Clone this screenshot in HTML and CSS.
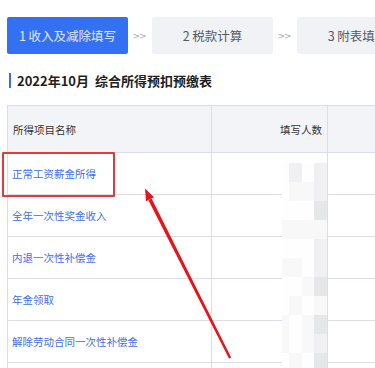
FILE: index.html
```html
<!DOCTYPE html>
<html lang="zh-CN">
<head>
<meta charset="utf-8">
<title>综合所得预扣预缴表</title>
<link rel="stylesheet" href="styles.css">
</head>
<body>
<div class="page">
  <div class="steps">
    <div class="step active">1 收入及减除填写</div>
    <div class="sep">&gt;&gt;</div>
    <div class="step">2 税款计算</div>
    <div class="sep">&gt;&gt;</div>
    <div class="step">3 附表填写</div>
  </div>
  <div class="title"><span class="bar"></span>2022年10月&nbsp;&nbsp;综合所得预扣预缴表</div>
  <div class="table-wrap">
    <table class="grid">
      <colgroup><col class="c1"><col class="c2"><col class="c3"></colgroup>
      <thead>
        <tr><th class="left">所得项目名称</th><th class="right">填写人数</th><th></th></tr>
      </thead>
      <tbody>
        <tr><td><a class="link">正常工资薪金所得</a></td><td></td><td></td></tr>
        <tr><td><a class="link">全年一次性奖金收入</a></td><td></td><td></td></tr>
        <tr><td><a class="link">内退一次性补偿金</a></td><td></td><td></td></tr>
        <tr><td><a class="link">年金领取</a></td><td></td><td></td></tr>
        <tr><td><a class="link">解除劳动合同一次性补偿金</a></td><td></td><td></td></tr>
        <tr><td></td><td></td><td></td></tr>
      </tbody>
    </table>
  </div>

  <div class="mosaic">
    <i class="m0"></i><i class="m2"></i><i class="m0"></i><i class="m2"></i>
    <i class="m0"></i><i class="m1"></i><i class="m1"></i><i class="m2"></i>
    <i class="m0"></i><i class="m0"></i><i class="m0"></i><i class="m3"></i>
    <i class="m1"></i><i class="m1"></i><i class="m1"></i><i class="m1"></i>
    <i class="m0"></i><i class="m0"></i><i class="m0"></i><i class="m2"></i>
    <i class="m1"></i><i class="m1"></i><i class="m0"></i><i class="m2"></i>
    <i class="m0"></i><i class="m0"></i><i class="m1"></i><i class="m3"></i>
    <i class="m0"></i><i class="m1"></i><i class="m0"></i><i class="m1"></i>
    <i class="m1"></i><i class="m0"></i><i class="m1"></i><i class="m3"></i>
    <i class="m1"></i><i class="m0"></i><i class="m1"></i><i class="m2"></i>
    <i class="m0"></i><i class="m1"></i><i class="m0"></i><i class="m3"></i>
  </div>

  <div class="redbox"></div>
  <svg class="arrow" width="375" height="368" viewBox="0 0 375 368">
    <polygon points="229,358.5 231.2,357.5 151.6,198.6 148.4,200.2" fill="#e8131b"/>
    <polygon points="145,188.5 154,197.2 146,201.2" fill="#e8131b"/>
  </svg>
</div>
</body>
</html>
```

FILE: styles.css
```css
html, body {
  margin: 0;
  padding: 0;
  background: #ffffff;
}
body {
  font-family: "Noto Sans CJK SC", "Noto Sans", sans-serif;
  width: 375px;
  height: 368px;
  overflow: hidden;
}
.page {
  position: relative;
  width: 375px;
  height: 368px;
  overflow: hidden;
}
.steps {
  display: flex;
  align-items: center;
  margin: 17px 0 0 7px;
  height: 37px;
  width: 460px;
}
.step {
  flex: 0 0 121px;
  height: 37px;
  box-sizing: border-box;
  display: flex;
  align-items: center;
  justify-content: center;
  background: #f1f2f5;
  border-radius: 2px;
  color: #555a63;
  font-size: 12.5px;
  white-space: nowrap;
}
.step.active {
  background: #3470f2;
  color: #e3e9fc;
}
.sep {
  flex: 0 0 24px;
  text-align: center;
  font-family: "DejaVu Sans", sans-serif;
  font-size: 9px;
  line-height: 10px;
  color: #a7abb3;
  letter-spacing: -1px;
  padding-right: 2px;
  box-sizing: border-box;
}
.title {
  display: flex;
  align-items: center;
  margin: 18px 0 0 9px;
  height: 16px;
  font-size: 13px;
  font-weight: bold;
  color: #1f1f1f;
  white-space: nowrap;
}
.bar {
  display: inline-block;
  width: 2px;
  height: 15px;
  background: #3470f2;
  margin-right: 6px;
}
.table-wrap {
  margin: 17px 0 0 7px;
  width: 400px;
}
.grid {
  border-collapse: collapse;
  table-layout: fixed;
  width: 400px;
  font-size: 10.5px;
}
.c1 { width: 204px; }
.c2 { width: 116px; }
.c3 { width: 80px; }
.grid th, .grid td {
  border: 1px solid #dcdee4;
  padding: 0 5px;
  white-space: nowrap;
}
.grid thead tr {
  height: 47px;
  background: #f3f4f7;
}
.grid th {
  font-weight: normal;
  color: #333;
}
.grid th.left { text-align: left; padding-left: 5px; }
.grid th.right { text-align: right; padding-right: 5px; }
.grid tbody tr {
  height: 42px;
}
.grid td { padding-left: 4px; }
.link {
  color: #3c6fe3;
}
.mosaic {
  position: absolute;
  left: 282px;
  top: 163px;
  width: 45px;
  height: 210px;
  display: grid;
  grid-template-columns: 7px 13px 12px 13px;
  grid-template-rows: repeat(11, 19px);
  background: #ffffff;
}
.mosaic i { display: block; }
.m0 { background: #fefefe; }
.m1 { background: #f8f8f9; }
.m2 { background: #f0f0f2; }
.m3 { background: #e6e7e9; }
.redbox {
  position: absolute;
  left: 2px;
  top: 152px;
  width: 113px;
  height: 45px;
  box-sizing: border-box;
  border: 2px solid #e23a3d;
  border-radius: 1px;
}
.arrow {
  position: absolute;
  left: 0;
  top: 0;
  pointer-events: none;
}
```
